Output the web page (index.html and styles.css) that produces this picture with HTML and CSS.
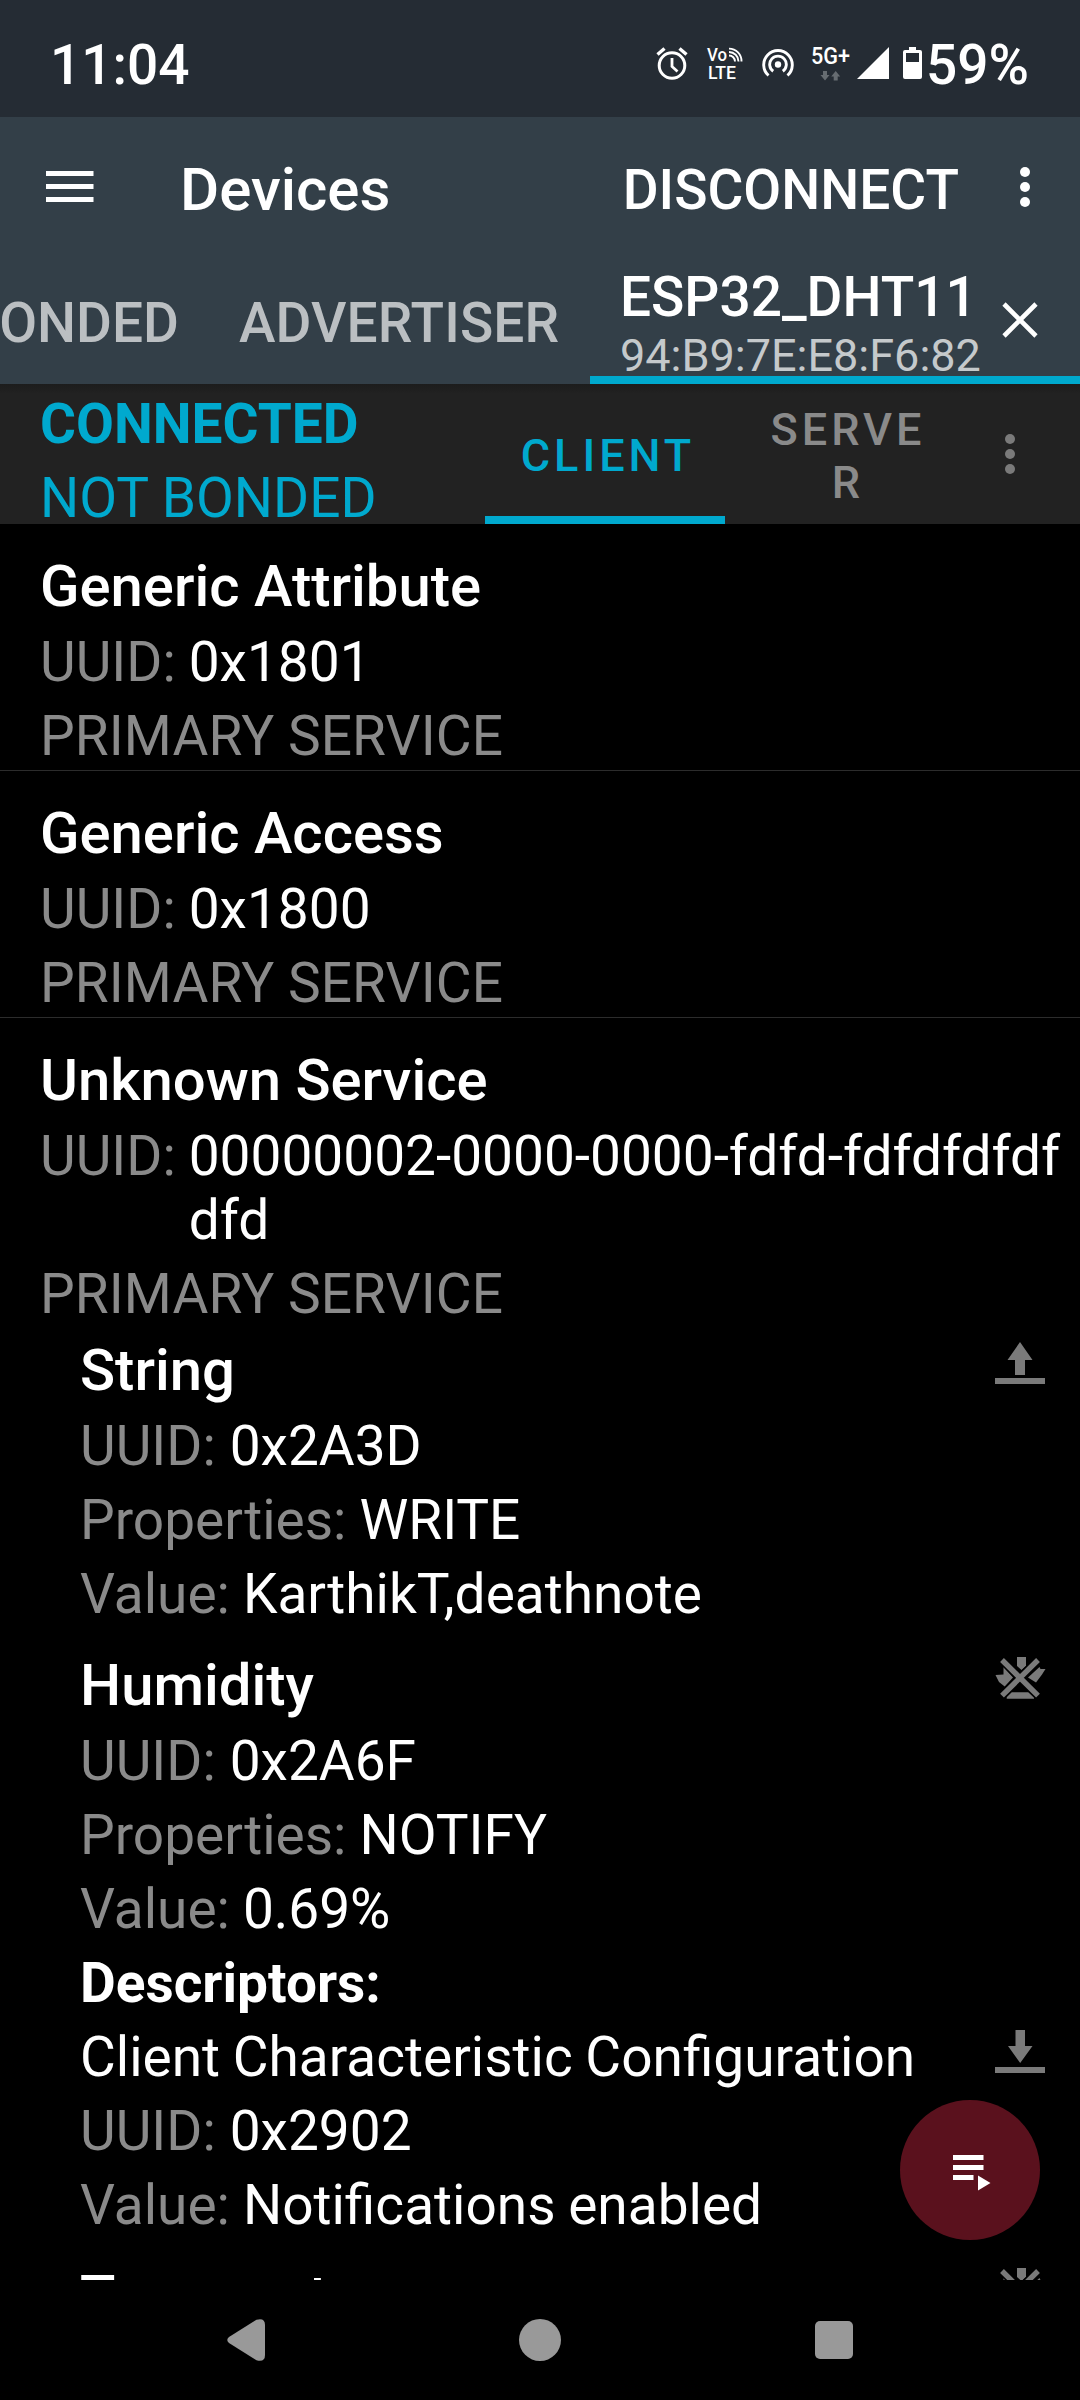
FILE: index.html
```html
<!DOCTYPE html>
<html lang="en">
<head>
<meta charset="utf-8">
<title>Devices</title>
<link rel="stylesheet" href="styles.css">
</head>
<body>
<svg class="defs" width="0" height="0">
  <symbol id="notify-off" viewBox="0 0 52 42">
    <path d="M22 0H31V9L26.5 13L22 9ZM.5 18L8.5 17.5V10L18 20.5L9.7 29.5L4 25ZM44.5 10L45.5 12H50.5L47 17.5L41 25.5L33 20.5ZM16.5 35.3H33.5L39 40V41.7H11.7V40Z"/>
    <path d="M7 3L43 38.7M43 3L7 38.7" fill="none" stroke="#000" stroke-width="8.5"/>
    <path d="M7 3L43 38.7M43 3L7 38.7" fill="none" stroke="currentColor" stroke-width="5.4"/>
  </symbol>
</svg>
<div class="screen">
  <header class="status">
    <span class="time">11:04</span>
    <div class="status-icons">
      <svg class="alarm" width="32" height="33" viewBox="0 0 32 33" fill="none" stroke="#fff"><circle cx="16" cy="18.5" r="12.8" stroke-width="3"/><path d="M16 11V19.5L21.5 24.5" stroke-width="2.8"/><path d="M1.5 7.5L8.5 1.5M23.5 1.5L30.5 7.5" stroke-width="3.4"/></svg>
      <svg class="volte" width="36" height="33" viewBox="0 0 36 33"><text x="0" y="14" textLength="20" lengthAdjust="spacingAndGlyphs">Vo</text><text x="1" y="32" textLength="28" lengthAdjust="spacingAndGlyphs">LTE</text><path d="M22 8.5A6 6 0 0 1 28 14.5M22 5A9.5 9.5 0 0 1 31.5 14.5M22 1.6A12.5 12.5 0 0 1 34.5 14.5" fill="none" stroke="#fff" stroke-width="1.9"/></svg>
      <svg class="hotspot" width="32" height="33" viewBox="0 0 32 33" fill="none" stroke="#fff" stroke-width="2.9"><circle cx="16" cy="17.5" r="3.2" fill="#fff" stroke="none"/><path d="M11.2 24.2A8.3 8.3 0 1 1 20.8 24.2M6.5 28.5A14.3 14.3 0 1 1 25.5 28.5"/></svg>
      <svg class="fiveg" width="40" height="36" viewBox="0 0 40 36"><text x="0" y="19" textLength="39" lengthAdjust="spacingAndGlyphs">5G+</text><path d="M12 26H16V30H18.5L14 35.5L9.5 30H12ZM22.7 35.5H26.7V31.5H29.2L24.7 26L20.2 31.5H22.7Z" fill="#666c71"/></svg>
      <svg class="signal" width="32" height="32" viewBox="0 0 32 32"><path d="M32 0V32H0Z" fill="#fff"/></svg>
      <svg class="battery" width="19" height="32" viewBox="0 0 19 32"><path fill-rule="evenodd" d="M6 0H13V3H17Q19 3 19 5V30Q19 32 17 32H2Q0 32 0 30V5Q0 3 2 3H6ZM3 6V15H16V6Z" fill="#fff"/></svg>
      <span class="percent">59%</span>
    </div>
  </header>

  <div class="toolbar">
    <svg class="burger" width="48" height="31" viewBox="0 0 48 31" fill="#fff"><path d="M0 0H47.5V5H0ZM0 13H47.5V18H0ZM0 26H47.5V31H0Z"/></svg>
    <h1 class="screen-title">Devices</h1>
    <span class="action">DISCONNECT</span>
    <svg class="more" width="10" height="40" viewBox="0 0 10 40" fill="#fff"><circle cx="5" cy="5" r="5"/><circle cx="5" cy="20" r="5"/><circle cx="5" cy="35" r="5"/></svg>
  </div>

  <nav class="tabs">
    <div class="tab bonded"><span>BONDED</span></div>
    <div class="tab advertiser"><span>ADVERTISER</span></div>
    <div class="tab device">
      <div class="device-text">
        <div class="device-name"><span>ESP32_DHT11</span></div>
        <div class="device-mac"><span>94:B9:7E:E8:F6:82</span></div>
      </div>
      <svg class="close" width="36" height="36" viewBox="0 0 36 36" fill="none" stroke="#fff" stroke-width="4.6"><path d="M2 2L34 34M34 2L2 34"/></svg>
    </div>
  </nav>

  <section class="connection">
    <div class="state">
      <div class="connected"><span>CONNECTED</span></div>
      <div><span>NOT BONDED</span></div>
    </div>
    <div class="role active">CLIENT</div>
    <div class="role">SERVE<br>R</div>
    <svg class="more" width="10" height="40" viewBox="0 0 10 40" fill="#7a7a7a"><circle cx="5" cy="5" r="5"/><circle cx="5" cy="20" r="5"/><circle cx="5" cy="35" r="5"/></svg>
  </section>

  <main class="list">
    <article class="service">
      <h2 class="title"><span>Generic Attribute</span></h2>
      <div class="row"><span class="label">UUID:</span><span class="value">0x1801</span></div>
      <div class="row"><span class="label kind">PRIMARY SERVICE</span></div>
    </article>
    <article class="service">
      <h2 class="title"><span>Generic Access</span></h2>
      <div class="row"><span class="label">UUID:</span><span class="value">0x1800</span></div>
      <div class="row"><span class="label kind">PRIMARY SERVICE</span></div>
    </article>
    <article class="service open">
      <h2 class="title"><span>Unknown Service</span></h2>
      <div class="row"><span class="label">UUID:</span><span class="value">00000002-0000-0000-fdfd-fdfdfdfdf<br>dfd</span></div>
      <div class="row"><span class="label kind">PRIMARY SERVICE</span></div>

      <div class="characteristic first">
        <div class="head">
          <h3 class="title"><span>String</span></h3>
          <svg class="icon" width="50" height="42" viewBox="0 0 50 42"><path d="M0 36H50V42H0ZM25 0L37.5 18H30V33H20V18H12.5Z"/></svg>
        </div>
        <div class="row uuid"><span class="label">UUID:</span><span class="value">0x2A3D</span></div>
        <div class="row"><span class="label">Properties:</span><span class="value">WRITE</span></div>
        <div class="row"><span class="label">Value:</span><span class="value">KarthikT,deathnote</span></div>
      </div>

      <div class="characteristic">
        <div class="head">
          <h3 class="title"><span>Humidity</span></h3>
          <svg class="icon wide" width="52" height="42"><use href="#notify-off"/></svg>
        </div>
        <div class="row uuid"><span class="label">UUID:</span><span class="value">0x2A6F</span></div>
        <div class="row"><span class="label">Properties:</span><span class="value">NOTIFY</span></div>
        <div class="row"><span class="label">Value:</span><span class="value">0.69%</span></div>
        <div class="row"><span class="strong">Descriptors:</span></div>
        <div class="head">
          <div class="row"><span class="value phrase">Client Characteristic Configuration</span></div>
          <svg class="icon" width="50" height="43" viewBox="0 0 50 43"><path d="M0 37H50V43H0ZM20.5 0H30V16H37.5L25.2 33L13 16H20.5Z"/></svg>
        </div>
        <div class="row uuid"><span class="label">UUID:</span><span class="value">0x2902</span></div>
        <div class="row"><span class="label">Value:</span><span class="value phrase">Notifications enabled</span></div>
      </div>

      <div class="characteristic">
        <div class="head">
          <h3 class="title"><span>Temperature</span></h3>
          <svg class="icon wide" width="52" height="42"><use href="#notify-off"/></svg>
        </div>
      </div>
    </article>
  </main>

  <footer class="system-nav">
    <svg width="38" height="42" viewBox="0 0 38 42"><path d="M2 18L29.5 .8Q38 -1.5 38 6V36Q38 43.5 29.5 41.2L2 24Q-1.5 21 2 18Z"/></svg>
    <svg class="home" width="42" height="42" viewBox="0 0 42 42"><circle cx="21" cy="21" r="21"/></svg>
    <svg class="recents" width="38" height="38" viewBox="0 0 38 38"><rect width="38" height="38" rx="5"/></svg>
  </footer>

  <div class="fab">
    <svg width="38" height="36" viewBox="0 0 38 36" fill="#fff"><path d="M0 0H30.5V5H0ZM0 10H30.5V15H0ZM0 20H20.5V25H0ZM25 20.5L37.5 28L25 35.5Z"/></svg>
  </div>
</div>
</body>
</html>
```
FILE: styles.css
```css
* { box-sizing: border-box; }

body {
  margin: 0;
  background: #000;
  color: #fff;
  font-family: Roboto, "Noto Sans", sans-serif;
  font-size: 55px;
}

h1, h2, h3 { margin: 0; font-weight: 500; }
svg { display: block; flex: none; }
.defs { position: absolute; }

.screen {
  position: relative;
  display: flex;
  flex-direction: column;
  width: 1080px;
  height: 2400px;
  overflow: hidden;
}

/* Status bar */
.status {
  display: flex;
  justify-content: space-between;
  align-items: center;
  height: 117px;
  padding: 13px 51px 0 50px;
  background: #252c34;
  font-weight: 500;
}
.status-icons { display: flex; align-items: center; }
.status-icons svg { margin-top: -4px; overflow: visible; }
.status text { fill: #fff; font-size: 18.5px; font-weight: 500; }
.status .fiveg text { font-size: 24px; }
.volte { margin-left: 19px; }
.hotspot { margin-left: 19px; }
.fiveg { margin-left: 17px; }
.signal { margin-left: 6px; }
.battery { margin-left: 14px; }
.percent { margin-left: 4px; }

/* App bar */
.toolbar {
  display: flex;
  align-items: center;
  height: 146px;
  padding: 0 50px 0 46px;
  background: #333f48;
}
.burger { margin-top: -7px; }
.screen-title { margin: -2px 0 0 86px; font-size: 60px; }
.action { margin-left: auto; margin-right: 61px; font-weight: 500; }
.toolbar .more { margin-top: -6px; }

.tabs {
  display: flex;
  height: 121px;
  background: #333f48;
  color: #bbbfc2;
  font-weight: 500;
}
.tab { display: flex; align-items: center; padding-bottom: 2px; }
.bonded { justify-content: flex-end; width: 179px; overflow: hidden; }
.advertiser { width: 411px; padding-left: 60px; letter-spacing: .1px; }
.device {
  justify-content: space-between;
  align-items: flex-start;
  width: 490px;
  padding: 5px 42px 0 30px;
  border-bottom: 8px solid #00a9ce;
}
.device-name { color: #fff; line-height: 58px; }
.device-mac { color: #c5c9cb; font-size: 45px; font-weight: 400; line-height: 59px; height: 50px; }
.close { margin-top: 34px; }

/* Connection bar */
.connection {
  display: flex;
  align-items: center;
  height: 140px;
  background: linear-gradient(#1c1c1c, #222 10px);
}
.state {
  width: 485px;
  height: 140px;
  padding: 3px 0 0 40px;
  color: #00a9ce;
  line-height: 74px;
}
.state div { height: 74px; }
.connected { font-weight: 700; }
.role {
  display: flex;
  align-items: center;
  justify-content: center;
  width: 240px;
  height: 140px;
  border-bottom: 8px solid transparent;
  padding: 11px 0 0 6px;
  color: #8a8a8a;
  font-size: 45px;
  font-weight: 500;
  letter-spacing: 4px;
  line-height: 53px;
  text-align: center;
}
.role.active { border-color: #00a9ce; color: #00a9ce; }
.connection .more { margin-left: 40px; }

/* Attribute list */
.list { height: 1756px; overflow: hidden; }
.service {
  height: 247px;
  padding: 24px 0 0 40px;
  border-bottom: 1px solid #2c2c2c;
}
.service.open { height: auto; border: 0; }
.title { font-size: 58px; line-height: 77px; }
.row {
  display: flex;
  gap: 13px;
  padding: 5px 0;
  line-height: 64px;
  white-space: nowrap;
}
.label { color: #8a8a8a; }
.kind { letter-spacing: .1px; }
.strong { font-weight: 700; }
.phrase { word-spacing: -1px; }
.characteristic { padding: 0 35px 16px 40px; }
.characteristic.first { padding-top: 1px; }
.row.uuid { gap: 14px; }
.head { display: flex; justify-content: space-between; align-items: flex-start; }
.icon { margin-top: 10px; fill: #7a7a7a; color: #7a7a7a; }
.icon.wide { margin-right: -2px; }

/* System navigation */
.system-nav {
  display: flex;
  align-items: center;
  height: 120px;
  padding-left: 227px;
  fill: #999;
}
.home { margin-left: 254px; }
.recents { margin-left: 254px; }

/* Floating macro button */
.fab {
  position: absolute;
  left: 900px;
  top: 2100px;
  width: 140px;
  height: 140px;
  padding: 55px 0 0 53px;
  border-radius: 50%;
  background: #5a111d;
}
```
